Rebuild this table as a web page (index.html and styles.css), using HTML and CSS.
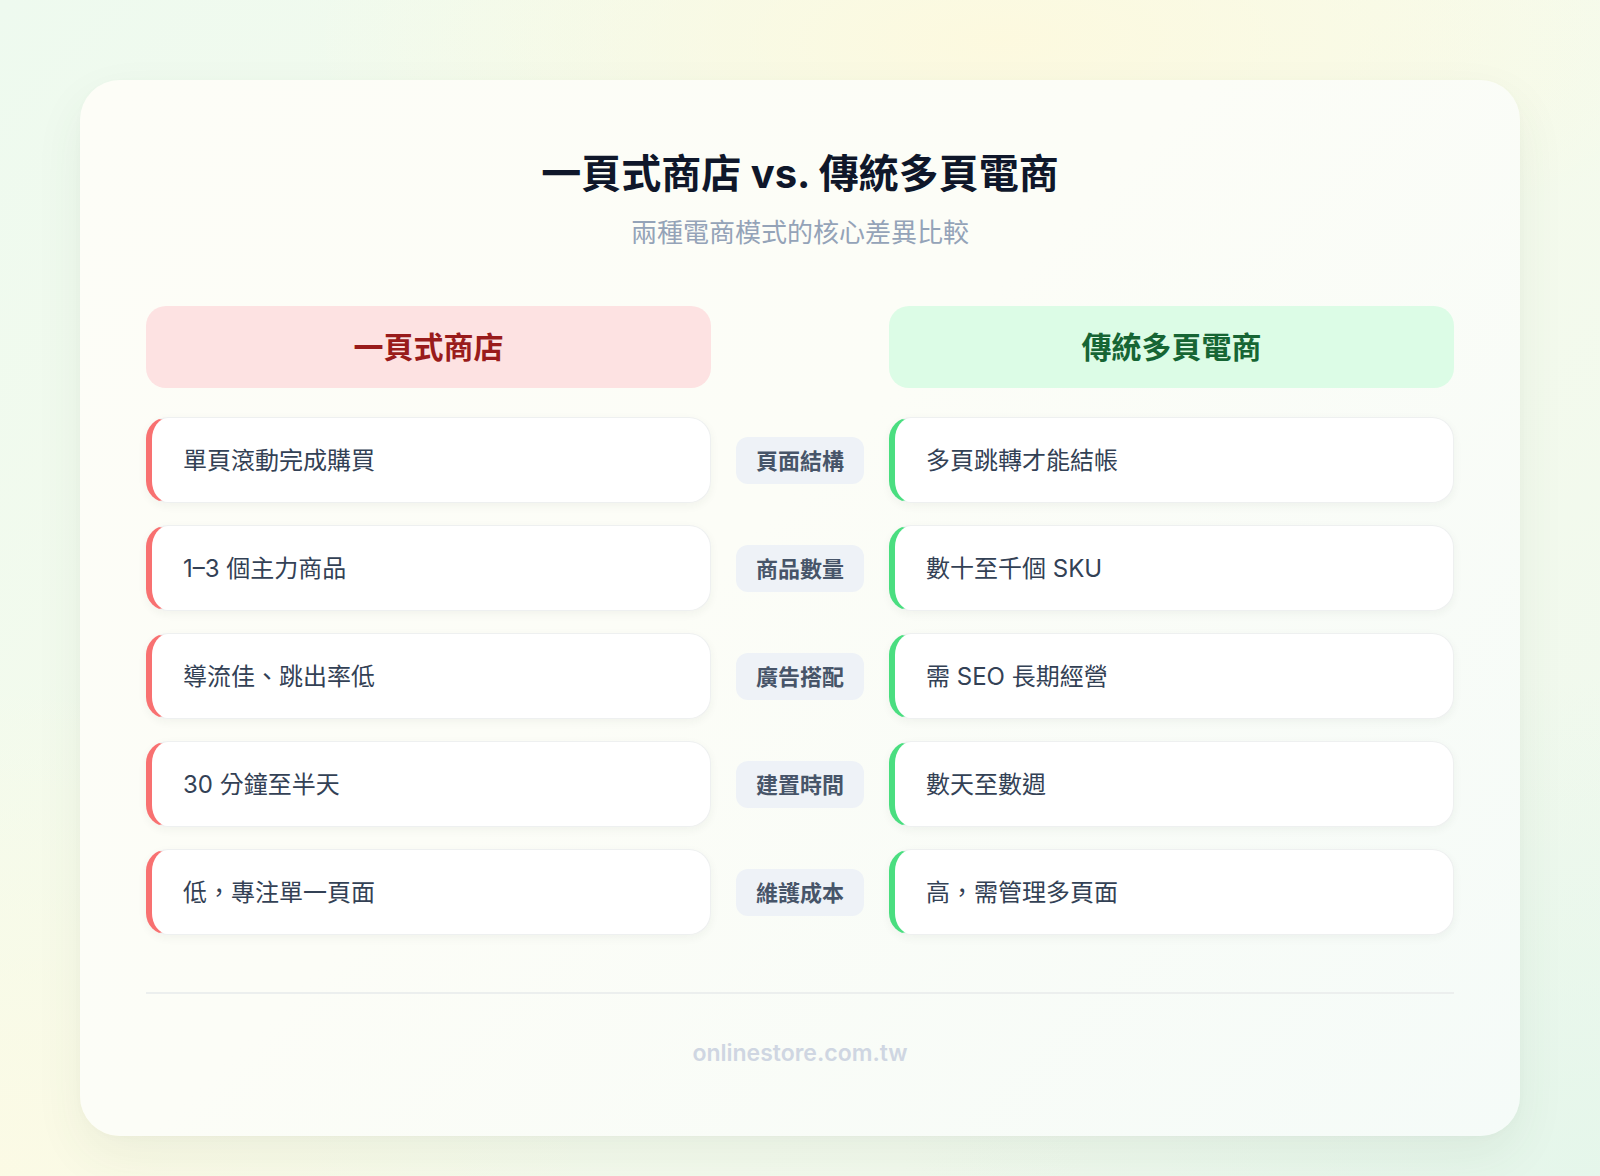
FILE: index.html
```html
<!DOCTYPE html>
<html lang="zh-Hant">
<head>
<meta charset="utf-8">
<title>一頁式商店 vs. 傳統多頁電商</title>
<link rel="stylesheet" href="styles.css">
</head>
<body>
<main class="card">
  <h1 class="title">一頁式商店 vs. 傳統多頁電商</h1>
  <p class="subtitle">兩種電商模式的核心差異比較</p>

  <div class="heads">
    <div class="head head-a">一頁式商店</div>
    <div class="head-spacer"></div>
    <div class="head head-b">傳統多頁電商</div>
  </div>

  <div class="rows">
    <div class="cell cell-a">單頁滾動完成購買</div>
    <div class="label"><span class="pill">頁面結構</span></div>
    <div class="cell cell-b">多頁跳轉才能結帳</div>

    <div class="cell cell-a">1–3 個主力商品</div>
    <div class="label"><span class="pill">商品數量</span></div>
    <div class="cell cell-b">數十至千個 SKU</div>

    <div class="cell cell-a">導流佳、跳出率低</div>
    <div class="label"><span class="pill">廣告搭配</span></div>
    <div class="cell cell-b">需 SEO 長期經營</div>

    <div class="cell cell-a">30 分鐘至半天</div>
    <div class="label"><span class="pill">建置時間</span></div>
    <div class="cell cell-b">數天至數週</div>

    <div class="cell cell-a">低，專注單一頁面</div>
    <div class="label"><span class="pill">維護成本</span></div>
    <div class="cell cell-b">高，需管理多頁面</div>
  </div>

  <hr class="divider">
  <footer class="footer">onlinestore.com.tw</footer>
</main>
</body>
</html>
```

FILE: styles.css
```css
* { box-sizing: border-box; }

html, body { margin: 0; padding: 0; }

body {
  width: 1600px;
  height: 1176px;
  padding: 80px;
  font-family: Inter, "Noto Sans CJK TC", "Noto Sans", sans-serif;
  background:
    radial-gradient(ellipse 700px 260px at 1000px 40px, rgba(253, 249, 222, 0.95), rgba(253, 249, 222, 0) 100%),
    radial-gradient(ellipse 600px 500px at 0px 1176px, rgba(252, 250, 228, 0.9), rgba(252, 250, 228, 0) 100%),
    radial-gradient(ellipse 700px 500px at 1600px 1176px, rgba(228, 246, 234, 0.9), rgba(228, 246, 234, 0) 100%),
    linear-gradient(135deg, #eefaef 0%, #f6fbec 50%, #eef8ee 100%);
  overflow: hidden;
}

.card {
  height: 1056px;
  border-radius: 40px;
  background: linear-gradient(135deg, #fdfdf7 0%, #fcfdf7 45%, #f5fbf8 100%);
  box-shadow: 0 20px 50px rgba(60, 90, 60, 0.07), 0 2px 8px rgba(0, 0, 0, 0.02);
  padding: 64px 66px 0;
  display: flex;
  flex-direction: column;
}

.title {
  margin: 0;
  text-align: center;
  font-size: 40px;
  line-height: 60px;
  font-weight: 700;
  color: #0f172a;
}

.subtitle {
  margin: 11px 0 0;
  text-align: center;
  font-size: 26px;
  line-height: 36px;
  font-weight: 400;
  color: #94a3b8;
}

.heads {
  margin-top: 55px;
  display: grid;
  grid-template-columns: 1fr 130px 1fr;
  column-gap: 24px;
}

.head {
  height: 82px;
  border-radius: 20px;
  display: flex;
  align-items: center;
  justify-content: center;
  padding-bottom: 4px;
  font-size: 30px;
  font-weight: 700;
}

.head-a { background: #fde2e2; color: #991b1b; }
.head-b { background: #dcfce6; color: #166534; }

.rows {
  margin-top: 29px;
  display: grid;
  grid-template-columns: 1fr 130px 1fr;
  column-gap: 24px;
  row-gap: 22px;
}

.cell {
  height: 86px;
  background: #ffffff;
  border-radius: 22px;
  border: 1px solid #eef0f0;
  border-left: 6px solid #f87171;
  box-shadow: 0 3px 10px rgba(40, 50, 40, 0.05);
  display: flex;
  align-items: center;
  padding-left: 31px;
  padding-bottom: 3px;
  font-size: 24px;
  color: #334155;
}

.cell-b { border-left-color: #4ade80; }

.label {
  display: flex;
  align-items: center;
  justify-content: center;
}

.pill {
  width: 128px;
  height: 47px;
  border-radius: 12px;
  background: #eef2f7;
  color: #475569;
  font-size: 22px;
  font-weight: 700;
  display: flex;
  align-items: center;
  justify-content: center;
  padding-bottom: 2px;
}

.divider {
  margin: 57px 0 0;
  border: 0;
  height: 2px;
  background: #ecefee;
}

.footer {
  margin-top: 44px;
  text-align: center;
  font-size: 23px;
  line-height: 30px;
  font-weight: 600;
  color: #cfd6e2;
}
```
